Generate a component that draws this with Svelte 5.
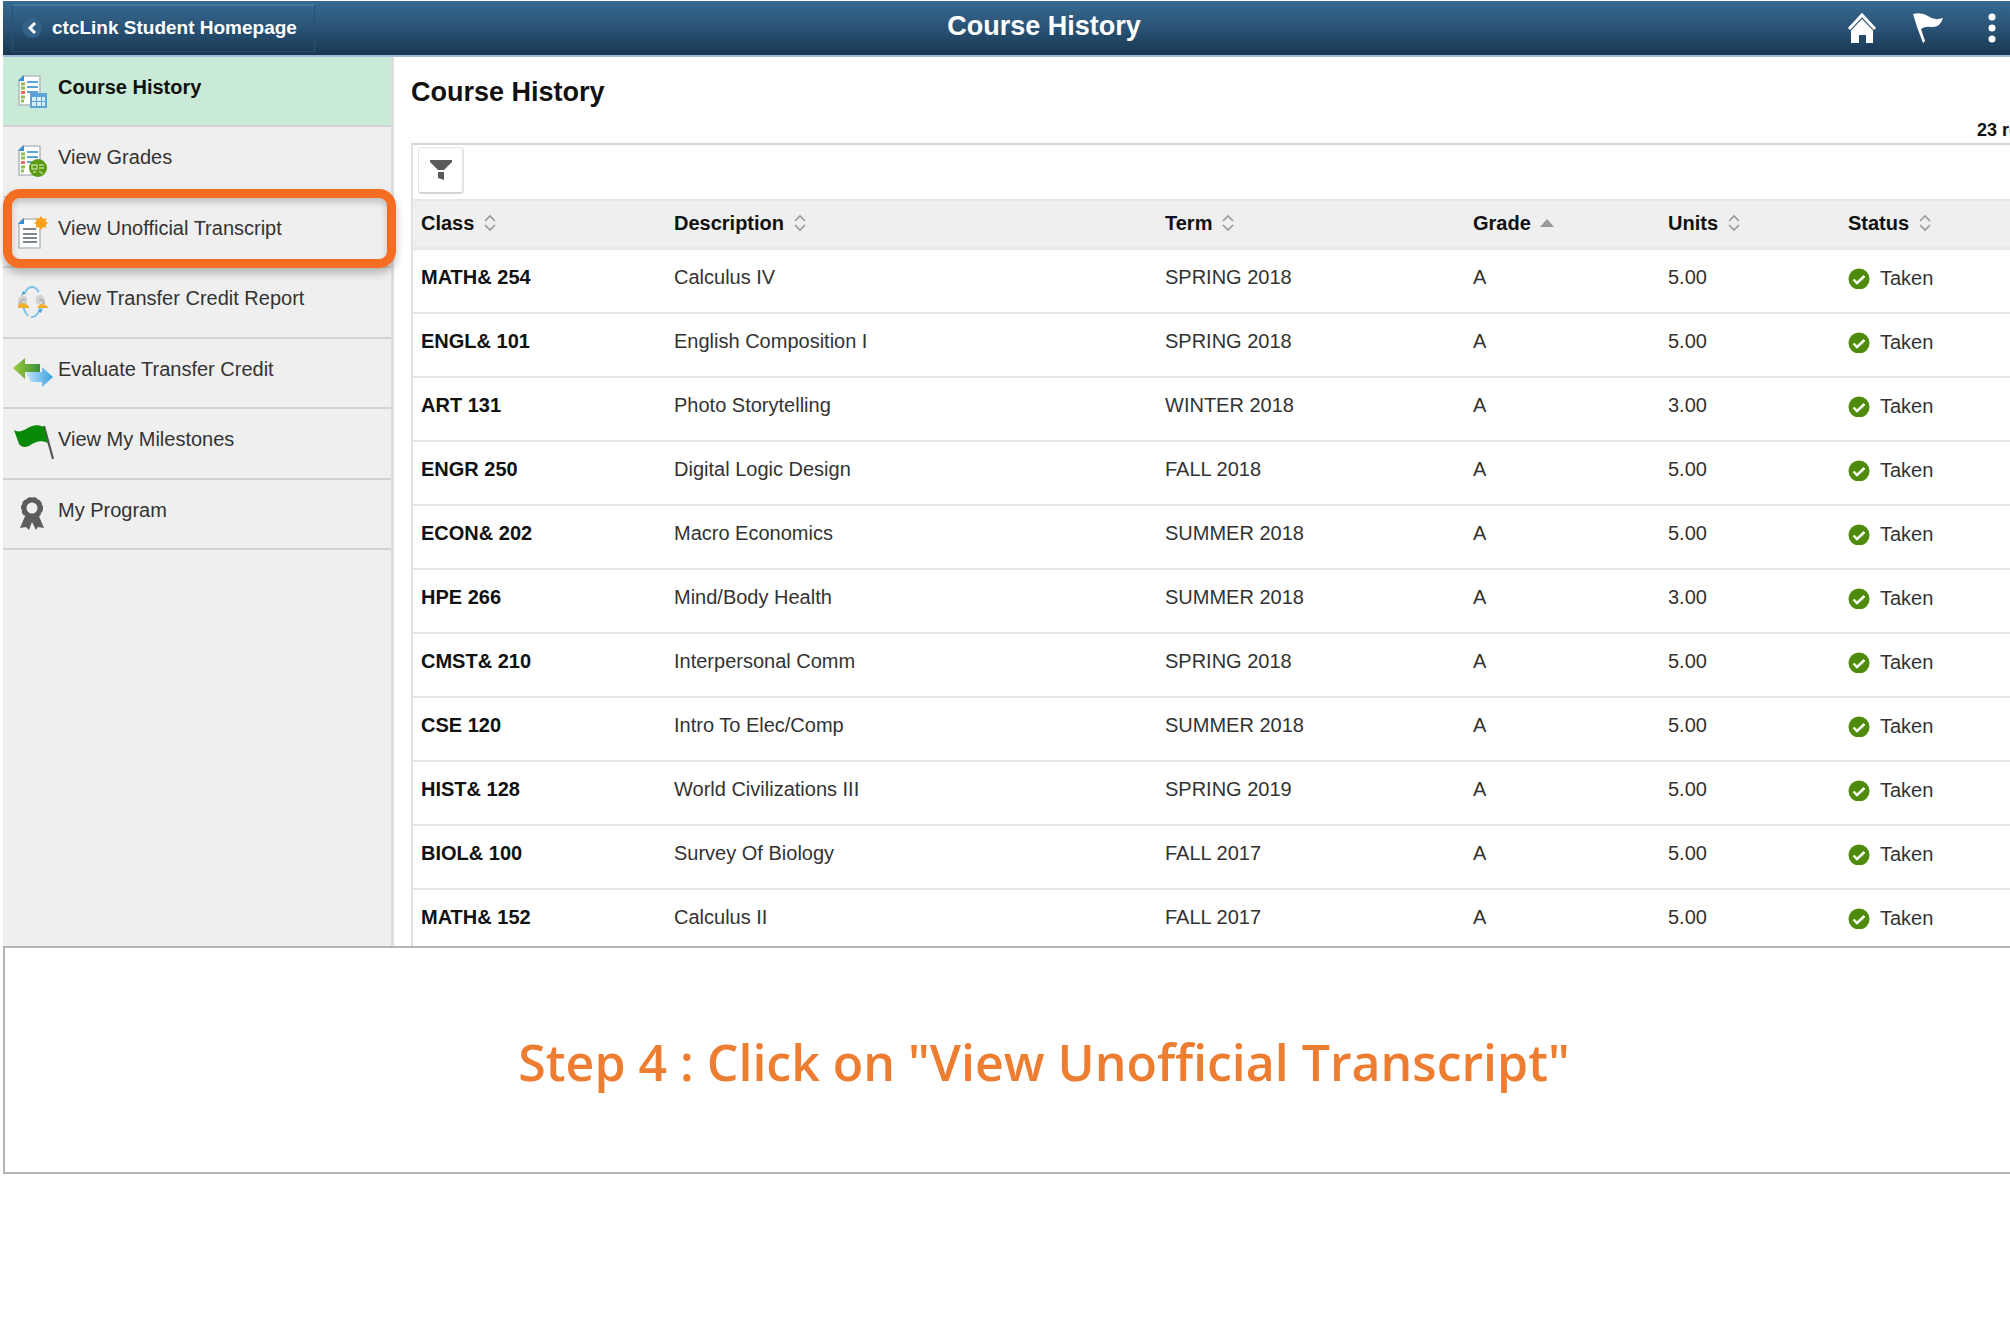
<script>
  const menu = [
    { id: 'history', label: 'Course History' },
    { id: 'grades', label: 'View Grades' },
    { id: 'transcript', label: 'View Unofficial Transcript' },
    { id: 'report', label: 'View Transfer Credit Report' },
    { id: 'evaluate', label: 'Evaluate Transfer Credit' },
    { id: 'milestones', label: 'View My Milestones' },
    { id: 'program', label: 'My Program' }
  ]

  const columns = ['Class', 'Description', 'Term', 'Grade', 'Units', 'Status']

  const courses = [
    { code: 'MATH& 254', name: 'Calculus IV', term: 'SPRING 2018', grade: 'A', units: '5.00' },
    { code: 'ENGL& 101', name: 'English Composition I', term: 'SPRING 2018', grade: 'A', units: '5.00' },
    { code: 'ART 131', name: 'Photo Storytelling', term: 'WINTER 2018', grade: 'A', units: '3.00' },
    { code: 'ENGR 250', name: 'Digital Logic Design', term: 'FALL 2018', grade: 'A', units: '5.00' },
    { code: 'ECON& 202', name: 'Macro Economics', term: 'SUMMER 2018', grade: 'A', units: '5.00' },
    { code: 'HPE 266', name: 'Mind/Body Health', term: 'SUMMER 2018', grade: 'A', units: '3.00' },
    { code: 'CMST& 210', name: 'Interpersonal Comm', term: 'SPRING 2018', grade: 'A', units: '5.00' },
    { code: 'CSE 120', name: 'Intro To Elec/Comp', term: 'SUMMER 2018', grade: 'A', units: '5.00' },
    { code: 'HIST& 128', name: 'World Civilizations III', term: 'SPRING 2019', grade: 'A', units: '5.00' },
    { code: 'BIOL& 100', name: 'Survey Of Biology', term: 'FALL 2017', grade: 'A', units: '5.00' },
    { code: 'MATH& 152', name: 'Calculus II', term: 'FALL 2017', grade: 'A', units: '5.00' }
  ]

  let current = $state('history')
  let sortedBy = $state('Grade')
</script>

{#snippet listPage()}
  <path d="M11 3H28V32H7V7Z" fill="#fff" stroke="#b4bcc1" stroke-width="1.6" />
  <path d="M6 8L12 2V8Z" fill="#2d8fe0" />
  <path d="M9 11H13M9 15H13M9 24H13M9 28H12" stroke="#8cc152" stroke-width="3" />
  <path d="M9 19.500H13" stroke="#f2685c" stroke-width="3" />
  <path d="M15 9H26M15 14H26M15 19H26" stroke="#5aa5d8" stroke-width="2" />
{/snippet}

{#snippet menuIcon(id)}
  <svg class="menu-icon" viewBox="0 0 42 36" aria-hidden="true">
    {#if id === 'history'}
      {@render listPage()}
      <rect x="18" y="20" width="17" height="15" fill="#5ba3d6" />
      <path d="M20 24H24V28H20ZM25 24H29V28H25ZM30 24H33V28H30ZM20 29H24V33H20ZM25 29H29V33H25ZM30 29H33V33H30Z" fill="#d8eefc" />
    {:else if id === 'grades'}
      {@render listPage()}
      <circle cx="26" cy="25" r="9" fill="#5a9a14" />
      <path d="M20 22H25V26H20ZM27 22H32M27 25H32M21 29H24M27 28L31 31" fill="none" stroke="#b9dc92" stroke-width="1.300" />
    {:else if id === 'transcript'}
      <path d="M11 5H28V34H7V9Z" fill="#fff" stroke="#b4bcc1" stroke-width="1.600" />
      <path d="M6 10L12 4V10Z" fill="#2d8fe0" />
      <path d="M11 15H24M11 20H25M11 24H25M11 28H25" stroke="#80868b" stroke-width="2.200" />
      <path d="M29 2L31 5L34.500 4L33.500 7.500L36 9L33.500 11L34.500 14L31 13L29 16L27 13L23.500 14L24.500 11L22 9L24.500 7.500L23.500 4L27 5Z" fill="#f9a11b" />
    {:else if id === 'report'}
      <ellipse cx="20" cy="18" rx="9" ry="15" fill="none" stroke="#7cc4ea" stroke-width="2" stroke-dasharray="20 3" />
      <path d="M11 7L9 12L14 9ZM29 29L31 24L26 27Z" fill="#4ba9e0" />
      <path d="M6 20V15Q9 9 15 13V20ZM24 20V13Q30 9 33 15V20Z" fill="#d3d3d3" />
      <path d="M8 20Q9 14 13 16M27 16Q31 14 32 20" fill="none" stroke="#aaa" stroke-width="1.500" />
      <path d="M6 24V21Q12 16 18 24ZM25 24Q29 16 37 24Z" fill="#f2ae2e" />
    {:else if id === 'evaluate'}
      <defs>
        <linearGradient id="green-arrow"><stop offset="0" stop-color="#9ccb3b" /><stop offset="1" stop-color="#3d8f3d" /></linearGradient>
        <linearGradient id="blue-arrow"><stop offset="0" stop-color="#c3e4fb" /><stop offset="1" stop-color="#38a0e0" /></linearGradient>
      </defs>
      <path d="M1 13L13 3V9H28V17H13V24Z" fill="url(#green-arrow)" />
      <path d="M41 22L30 12V17H14L19 27H30V32Z" fill="url(#blue-arrow)" />
    {:else if id === 'milestones'}
      <path d="M32 1L41 34" stroke="#555" stroke-width="2.200" />
      <path d="M2 5C5 7 9 7 14 4C20 0 26 -1 32 2L36 18C30 15 25 16 20 19C15 23 10 23 7 19Z" fill="#078a07" />
    {:else}
      <path d="M14 18L8 32L14 31L17 34L20 26L24 34L26 31L32 32L26 18Z" fill="#5c5c5c" />
      <circle cx="20" cy="12" r="8" fill="#efefef" stroke="#5c5c5c" stroke-width="5" />
      <circle cx="20" cy="12" r="10" fill="none" stroke="#5c5c5c" stroke-width="2" stroke-dasharray="4 2" />
    {/if}
  </svg>
{/snippet}

<div class="page">
  <div class="screen">
    <header>
      <a class="back" href="#home">
        <svg viewBox="0 0 20 20" aria-hidden="true">
          <circle cx="10" cy="10" r="10" fill="#34618a" />
          <path d="M13 5L8 10L13 15" fill="none" stroke="#fff" stroke-width="3" />
        </svg>
        ctcLink Student Homepage
      </a>
      <p class="title">Course History</p>
      <div class="actions">
        <button type="button" aria-label="Home">
          <svg viewBox="0 0 30 32">
            <path d="M2 17L15 3L28 17" fill="none" stroke="#fff" stroke-width="3" />
            <path d="M4 18.500L15 7L26 18.500V31H19V23H12V31H4Z" fill="#fff" />
          </svg>
        </button>
        <button type="button" aria-label="Notifications">
          <svg viewBox="0 0 30 32">
            <path d="M0 2Q9 0 15 4Q21 9 30 6Q27 16 18 15Q12 14 8 17L12 29L10 31L4 15Z" fill="#fff" />
          </svg>
        </button>
        <button type="button" class="more" aria-label="Actions">
          <svg viewBox="0 0 10 32">
            <circle cx="5" cy="5" r="3.500" fill="#fff" />
            <circle cx="5" cy="16" r="3.500" fill="#fff" />
            <circle cx="5" cy="27" r="3.500" fill="#fff" />
          </svg>
        </button>
      </div>
    </header>

    <div class="body">
      <nav>
        <ul>
          {#each menu as item}
            <li class:active={item.id === current} class:marked={item.id === 'transcript'}>
              <a href={'#' + item.id} onclick={() => (current = item.id)}>
                {@render menuIcon(item.id)}
                <span>{item.label}</span>
              </a>
            </li>
          {/each}
        </ul>
      </nav>

      <main>
        <h1>Course History</h1>
        <p class="count">23 rows</p>
        <div class="grid">
          <div class="toolbar">
            <button type="button" class="filter" aria-label="Filter">
              <svg viewBox="0 0 22 20">
                <path d="M0 0H22V2L14 10H8L0 2Z" fill="#5a5a5a" />
                <path d="M8 12H14V20L8 18Z" fill="#5a5a5a" />
              </svg>
            </button>
          </div>
          <table>
            <thead>
              <tr>
                {#each columns as column}
                  <th class={column.toLowerCase()}>
                    <button type="button" onclick={() => (sortedBy = column)}>
                      {column}
                      <svg viewBox="0 0 14 18" aria-hidden="true">
                        {#if column === sortedBy}
                          <path d="M0 13L7 5L14 13Z" fill="#999" />
                        {:else}
                          <path d="M2 7L7 2L12 7M2 11L7 16L12 11" fill="none" stroke="#999" stroke-width="1.600" />
                        {/if}
                      </svg>
                    </button>
                  </th>
                {/each}
              </tr>
            </thead>
            <tbody>
              {#each courses as course}
                <tr>
                  <td class="code">{course.code}</td>
                  <td>{course.name}</td>
                  <td>{course.term}</td>
                  <td>{course.grade}</td>
                  <td>{course.units}</td>
                  <td>
                    <span class="taken">
                      <svg viewBox="0 0 22 22" aria-hidden="true">
                        <circle cx="11" cy="12" r="10.500" fill="#4e8a0c" />
                        <path d="M5.500 12.500L9 16L16.500 9" fill="none" stroke="#fff" stroke-width="2.400" />
                      </svg>
                      Taken
                    </span>
                  </td>
                </tr>
              {/each}
            </tbody>
          </table>
        </div>
      </main>
    </div>

    <section class="step">
      <h2>Step 4 : Click on "View Unofficial Transcript"</h2>
    </section>
  </div>
</div>

<style>
  :global(body) {
    background: #fff;
  }
  .page {
    overflow: hidden;
    padding: 1px 0 0 3px;
    font: 20px/24px 'Liberation Sans', Arial, sans-serif;
    color: #333;
  }
  /* the screen is wider than the window and gets cut off on the right */
  .screen {
    margin-right: -75px;
  }
  h1,
  h2,
  p,
  ul {
    margin: 0;
    padding: 0;
  }
  a {
    color: inherit;
    text-decoration: none;
  }
  button {
    padding: 0;
    border: none;
    background: none;
    font: inherit;
    color: inherit;
    cursor: pointer;
  }
  svg {
    display: block;
  }

  header {
    display: grid;
    grid-template-columns: 1fr auto 1fr;
    align-items: start;
    height: 54px;
    background: linear-gradient(#376a91, #2b5578 45%, #193852);
    border-bottom: 2px solid #a3bcdb;
    color: #fff;
  }
  .back {
    display: flex;
    align-items: center;
    justify-self: start;
    box-sizing: border-box;
    gap: 10px;
    height: 48px;
    margin: 3px 0 0 9px;
    padding: 0 17px 2px 9px;
    border: 1px solid #28506f;
    border-top: 2px solid #4479a0;
    font-size: 19px;
    font-weight: bold;
  }
  .back svg {
    width: 20px;
    height: 20px;
  }
  .title {
    padding-top: 9px;
    font-size: 27px;
    font-weight: bold;
    line-height: 32px;
  }
  .actions {
    display: flex;
    justify-content: flex-end;
    gap: 36px;
    padding: 11px 88px 0 0;
  }
  .actions svg {
    width: 30px;
    height: 32px;
  }
  .actions .more {
    margin-left: 8px;
  }
  .actions .more svg {
    width: 10px;
  }

  .body {
    display: flex;
  }
  nav {
    flex: 0 0 388px;
    background: #efefef;
    border-right: 3px solid #ddd;
  }
  ul {
    display: grid;
    grid-auto-rows: 1fr;
    min-height: 493px;
    list-style: none;
  }
  li {
    position: relative;
    border-bottom: 2px solid #d2d2d2;
  }
  li a {
    display: flex;
    gap: 4px;
    padding: 16px 0 0 9px;
  }
  li span {
    padding-top: 2px;
  }
  .active {
    background: #c8ead6;
    color: #111;
    font-weight: bold;
  }
  .menu-icon {
    width: 42px;
    height: 36px;
  }
  .marked {
    z-index: 1;
  }
  .marked::after {
    content: '';
    position: absolute;
    inset: -9px -5px -2px 0;
    border: 9px solid #f56d22;
    border-radius: 17px;
    box-shadow: 0 5px 8px rgba(0, 0, 0, 0.25), inset 0 4px 6px rgba(0, 0, 0, 0.2);
    pointer-events: none;
  }

  main {
    flex: 1;
    padding: 19px 0 0 17px;
  }
  h1 {
    color: #111;
    font-size: 27px;
    line-height: 32px;
  }
  .count {
    padding: 10px 41px 1px 0;
    color: #111;
    font-size: 18px;
    font-weight: bold;
    text-align: right;
  }
  .grid {
    border-top: 2px solid #d6d6d6;
    border-left: 2px solid #e2e2e2;
  }
  .toolbar {
    padding: 2px 5px 5px;
  }
  .filter {
    display: flex;
    align-items: center;
    justify-content: center;
    width: 46px;
    height: 47px;
    border: 1px solid #e4e4e4;
    border-right-width: 2px;
    border-bottom: 2px solid #d4d4d4;
    border-radius: 4px;
  }
  .filter svg {
    width: 22px;
    height: 20px;
  }
  table {
    width: 100%;
    table-layout: fixed;
    border-spacing: 0;
  }
  th,
  td {
    padding: 0 8px;
    text-align: left;
    vertical-align: top;
  }
  th {
    padding-top: 10px;
    padding-bottom: 12px;
    background: #efefef;
    border-top: 2px solid #e6e6e6;
    border-bottom: 3px solid #e9e9e9;
    color: #111;
  }
  th button {
    display: flex;
    align-items: center;
    gap: 9px;
  }
  th svg {
    width: 14px;
    height: 18px;
  }
  .class {
    width: 237px;
  }
  .description {
    width: 475px;
  }
  .term {
    width: 292px;
  }
  .grade {
    width: 179px;
  }
  .units {
    width: 164px;
  }
  td {
    padding-top: 15px;
    padding-bottom: 22px;
    border-bottom: 2px solid #e6e6e6;
  }
  tr:last-child td {
    padding-bottom: 16px;
    border-bottom: none;
  }
  .code {
    color: #111;
    font-weight: bold;
  }
  .taken {
    display: flex;
    align-items: center;
    gap: 10px;
    padding-top: 1px;
  }
  .taken svg {
    width: 22px;
    height: 22px;
  }

  .step {
    padding: 83px 0 79px;
    border: 2px solid #b4b4b4;
    color: #ed7d31;
    text-align: center;
  }
  h2 {
    font: 600 50px/62px 'Open Sans', 'Noto Sans', sans-serif;
  }
</style>
